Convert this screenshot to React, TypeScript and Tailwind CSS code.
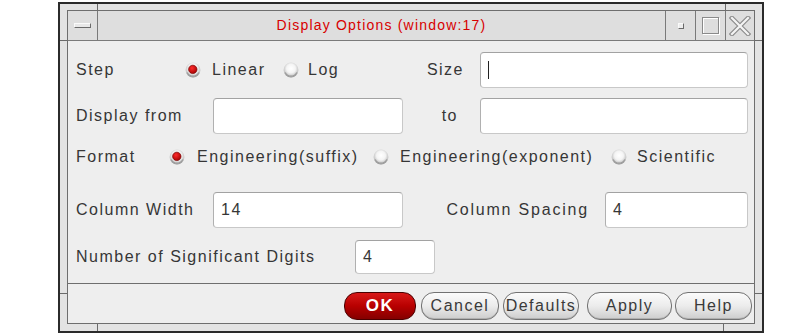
import React from "react";

function Radio({ on }: { on?: boolean }) {
  return (
    <svg width="16" height="16" viewBox="0 0 16 16" className="shrink-0">
      <defs>
        <radialGradient id="rg" cx="50%" cy="40%" r="60%">
          <stop offset="0" stopColor="#ffffff" />
          <stop offset="0.5" stopColor="#f4f4f4" />
          <stop offset="0.85" stopColor="#c4c4c4" />
          <stop offset="1" stopColor="#8a8a8a" />
        </radialGradient>
        <radialGradient id="rr" cx="40%" cy="35%" r="70%">
          <stop offset="0" stopColor="#ff2a2a" />
          <stop offset="1" stopColor="#a00000" />
        </radialGradient>
      </defs>
      <circle cx="8" cy="8" r="7.4" fill="url(#rg)" />
      <path d="M2.2 10.5 A6.4 6.4 0 0 0 13.8 10.5" stroke="#9a9a9a" strokeWidth="1.2" fill="none" />
      {on && <circle cx="7.8" cy="7.4" r="4.2" fill="url(#rr)" stroke="#7a0000" strokeWidth="0.7" />}
    </svg>
  );
}

function Field({ w, h = 36, value, cursor }: { w: string; h?: number; value?: string; cursor?: boolean }) {
  return (
    <div
      className={`${w} ${h === 34 ? "h-[34px]" : "h-[36px]"} shrink-0 flex items-center bg-white rounded-[4px] border border-[#c8c8c8] border-t-[#a2a2a2] border-l-[#b0b0b0] pl-[7px]`}
    >
      {cursor && <div className="w-px h-[18px] bg-[#222]" />}
      {value && <span>{value}</span>}
    </div>
  );
}

function Btn({ label, cls }: { label: string; cls: string }) {
  return (
    <div
      className={`${cls} h-[28px] shrink-0 flex items-center justify-center rounded-[13px] border border-[#727272] bg-gradient-to-b from-[#fbfbfb] via-[#ececec] to-[#cdcdcd] shadow-[inset_0_-1px_0_#b0b0b0] text-[#3a3a3a]`}
    >
      {label}
    </div>
  );
}

export default function App() {
  return (
    <div className="w-[811px] h-[334px] bg-white pt-[2px] pl-[58px] font-['Liberation_Sans',Arial,sans-serif] text-[16px] tracking-[1.5px] text-[#363636] overflow-hidden">
      <div className="relative w-[706px] h-[331px] border-2 border-[#2b2b2b] bg-[#e3e3e3] pt-[6px] pl-[7px] pr-[7px] pb-[7px]">
        {/* frame notches */}
        <div className="absolute left-[37px] top-0 w-px h-[6px] bg-[#6a6a6a]" />
        <div className="absolute left-[665px] top-0 w-px h-[6px] bg-[#6a6a6a]" />
        <div className="absolute left-[37px] bottom-0 w-px h-[7px] bg-[#6a6a6a]" />
        <div className="absolute left-[663px] bottom-0 w-px h-[7px] bg-[#6a6a6a]" />
        <div className="absolute left-0 top-[36px] w-[7px] h-px bg-[#6a6a6a]" />
        <div className="absolute right-0 top-[36px] w-[7px] h-px bg-[#6a6a6a]" />
        <div className="absolute left-0 top-[289px] w-[7px] h-px bg-[#6a6a6a]" />
        <div className="absolute right-0 top-[289px] w-[7px] h-px bg-[#6a6a6a]" />

        <div className="flex flex-col h-full border border-[#6e6e6e] bg-[#eeeeee]">
          {/* title bar */}
          <div className="h-[30px] flex border-b border-[#7a7a7a] bg-[#dedede]">
            <div className="w-[30px] border-r border-[#7a7a7a] flex items-center justify-center">
              <div className="w-[17px] h-[5px] bg-[#e8e8e8] border border-[#fafafa] border-r-[#6a6a6a] border-b-[#6a6a6a]" />
            </div>
            <div className="flex-1 flex items-center justify-center text-[14px] tracking-[1.2px] text-[#d80000]">
              Display Options (window:17)
            </div>
            <div className="w-[30px] border-l border-[#7a7a7a] flex items-center justify-center">
              <div className="w-[6px] h-[6px] bg-[#ededed] border border-[#fafafa] border-r-[#6a6a6a] border-b-[#6a6a6a]" />
            </div>
            <div className="w-[30px] border-l border-[#7a7a7a] flex items-center justify-center">
              <div className="w-[17px] h-[17px] border border-[#8a8a8a] shadow-[inset_1px_1px_0_#ffffff,1px_1px_0_#ffffff]" />
            </div>
            <div className="w-[29px] border-l border-[#7a7a7a] flex items-center justify-center">
              <svg width="22" height="20" viewBox="0 0 22 20">
                <path d="M3 2 L19 18 M19 2 L3 18" stroke="#8c8c8c" strokeWidth="4.5" strokeLinecap="square" fill="none" />
                <path d="M3 2 L19 18 M19 2 L3 18" stroke="#f4f4f4" strokeWidth="2.2" strokeLinecap="square" fill="none" />
              </svg>
            </div>
          </div>

          {/* form */}
          <div className="flex flex-col pl-[8px] pr-[6px] pt-[11px]">
            <div className="flex items-center h-[36px]">
              <div className="w-[109px] shrink-0">Step</div>
              <div className="w-[98px] shrink-0 flex items-center">
                <Radio on />
                <span className="ml-[11px]">Linear</span>
              </div>
              <div className="flex items-center">
                <Radio />
                <span className="ml-[9px]">Log</span>
              </div>
              <div className="flex-1 text-right pr-[16px]">Size</div>
              <Field w="w-[268px]" cursor />
            </div>

            <div className="flex items-center h-[36px] mt-[10px]">
              <div className="w-[137px] shrink-0">Display from</div>
              <Field w="w-[190px]" />
              <div className="flex-1 text-right pr-[22px]">to</div>
              <Field w="w-[268px]" />
            </div>

            <div className="flex items-center h-[26px] mt-[10px]">
              <div className="w-[93px] shrink-0">Format</div>
              <div className="w-[204px] shrink-0 flex items-center">
                <Radio on />
                <span className="ml-[12px]">Engineering(suffix)</span>
              </div>
              <div className="w-[238px] shrink-0 flex items-center">
                <Radio />
                <span className="ml-[11px]">Engineering(exponent)</span>
              </div>
              <div className="flex items-center">
                <Radio />
                <span className="ml-[10px]">Scientific</span>
              </div>
            </div>

            <div className="flex items-center h-[36px] mt-[22px]">
              <div className="w-[137px] shrink-0">Column Width</div>
              <Field w="w-[190px]" value="14" />
              <div className="flex-1 text-right pr-[16px] tracking-[1.8px]">Column Spacing</div>
              <Field w="w-[143px]" value="4" />
            </div>

            <div className="flex items-center h-[34px] mt-[12px]">
              <div className="w-[279px] shrink-0">Number of Significant Digits</div>
              <Field w="w-[80px]" h={34} value="4" />
            </div>
          </div>

          <div className="mt-[9px] border-t border-[#6e6e6e]" />

          <div className="flex-1 flex items-start justify-end pt-[8px] pr-[2px]">
            <div className="w-[72px] h-[28px] shrink-0 flex items-center justify-center rounded-[13px] border border-[#4a0000] bg-gradient-to-b from-[#d81818] via-[#b80000] to-[#850000] text-white font-bold text-[17px] tracking-[1.5px]">
              OK
            </div>
            <Btn label="Cancel" cls="ml-[5px] w-[78px]" />
            <Btn label="Defaults" cls="ml-[4px] w-[76px]" />
            <Btn label="Apply" cls="ml-[8px] w-[85px]" />
            <Btn label="Help" cls="ml-[3px] w-[77px]" />
          </div>
        </div>
      </div>
    </div>
  );
}
